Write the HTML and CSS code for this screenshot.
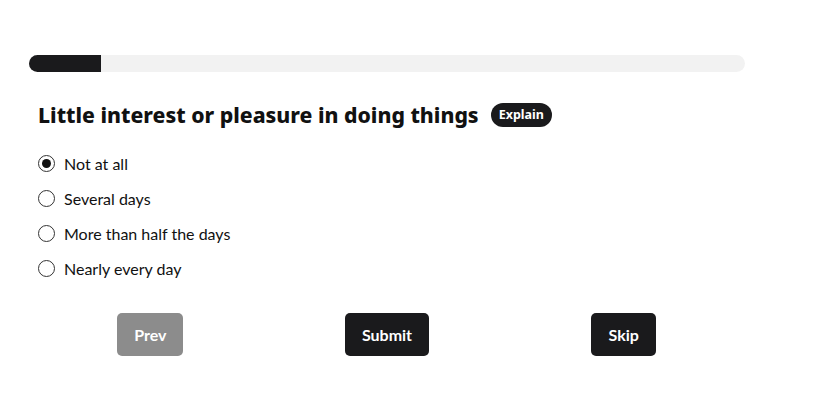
FILE: index.html
```html
<!DOCTYPE html>
<html lang="en">
<head>
    <meta charset="UTF-8">
    <meta name="viewport" content="width=device-width, initial-scale=1.0">
    <title>Questionnaire</title>
    <link rel="stylesheet" href="styles.css">
</head>
<body>
    <div class="quiz">
        <div class="progress">
            <div class="progress-fill" style="width: 10%"></div>
        </div>

        <div class="question">
            <h2>Little interest or pleasure in doing things <span class="explain">Explain</span></h2>

            <label class="option"><input type="radio" name="q1" checked> Not at all</label>
            <label class="option"><input type="radio" name="q1"> Several days</label>
            <label class="option"><input type="radio" name="q1"> More than half the days</label>
            <label class="option"><input type="radio" name="q1"> Nearly every day</label>
        </div>

        <div class="actions">
            <button class="btn btn-disabled">Prev</button>
            <button class="btn">Submit</button>
            <button class="btn">Skip</button>
        </div>
    </div>
</body>
</html>
```

FILE: styles.css
```css
body {
    font-family: "Lato", "Noto Sans", sans-serif;
    margin: 0;
    padding: 0;
    background: #fff;
    color: #111;
}
.quiz {
    width: 716px;
    margin-left: 29px;
    padding-top: 55px;
}
.progress {
    height: 17px;
    background: #f2f2f2;
    border-radius: 9px;
    overflow: hidden;
}
.progress-fill {
    height: 100%;
    background: #1a1a1c;
}
.question {
    padding: 0 9px;
}
h2 {
    font-family: "Noto Sans", sans-serif;
    font-size: 21.2px;
    font-weight: 800;
    margin: 28px 0 16px;
    display: flex;
    align-items: center;
    gap: 12px;
    line-height: 30px;
}
.explain {
    font-family: "Noto Sans", sans-serif;
    background: #1a1a1c;
    color: #fff;
    font-size: 12.5px;
    font-weight: 700;
    padding: 0 8px;
    height: 24px;
    line-height: 24px;
    border-radius: 12px;
}
.option {
    display: flex;
    align-items: center;
    gap: 9px;
    font-size: 16px;
    height: 35px;
}
.option input {
    appearance: none;
    width: 17px;
    height: 17px;
    margin: 0;
    border: 1.5px solid #333;
    border-radius: 50%;
    display: grid;
    place-items: center;
}
.option input:checked::after {
    content: "";
    width: 9px;
    height: 9px;
    border-radius: 50%;
    background: #111;
}
.actions {
    display: grid;
    grid-template-columns: repeat(3, 1fr);
    justify-items: center;
    margin: 27px 3px 0;
}
.btn {
    font-family: inherit;
    font-size: 16px;
    font-weight: 700;
    color: #fff;
    background: #1a1a1c;
    border: none;
    border-radius: 5px;
    height: 43px;
    padding: 0 17px;
    cursor: pointer;
}
.btn-disabled {
    background: #8c8c8c;
}
```
